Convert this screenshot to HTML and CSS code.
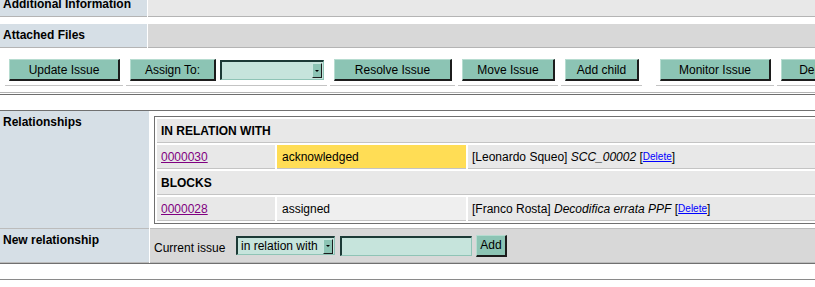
FILE: index.html
```html
<!DOCTYPE html>
<html>
<head>
<meta charset="utf-8">
<title>Issue details</title>
<link rel="stylesheet" href="styles.css">
</head>
<body>
<div class="page">
  <div class="row row-info">
    <div class="label">Additional Information</div>
    <div class="value value-light"></div>
  </div>
  <div class="row row-files">
    <div class="label">Attached Files</div>
    <div class="value value-dark"></div>
  </div>

  <div class="actions">
    <div class="act"><button class="btn w-update">Update Issue</button></div>
    <div class="act"><button class="btn w-assign">Assign To:</button><span class="select sel-assign"><span class="sel-text"></span><span class="sel-arrow"><span class="tri"></span></span></span></div>
    <div class="act"><button class="btn w-resolve">Resolve Issue</button></div>
    <div class="act"><button class="btn w-move">Move Issue</button></div>
    <div class="act"><button class="btn w-child">Add child</button></div>
    <div class="act-spacer"></div>
    <div class="act"><button class="btn w-monitor">Monitor Issue</button></div>
    <div class="act"><button class="btn w-delete">Delete Issue</button></div>
  </div>

  <div class="sep"></div>

  <div class="rel">
    <div class="rel-row">
      <div class="rel-label">Relationships</div>
      <div class="rel-body">
        <div class="inner">
          <div class="icell ihead">IN RELATION WITH</div>
          <div class="icell"><a class="issue" href="#">0000030</a></div>
          <div class="icell st-ack">acknowledged</div>
          <div class="icell">[Leonardo Squeo]&nbsp;<i>SCC_00002</i>&nbsp;[<a class="del" href="#">Delete</a>]</div>
          <div class="icell ihead">BLOCKS</div>
          <div class="icell"><a class="issue" href="#">0000028</a></div>
          <div class="icell st-assigned">assigned</div>
          <div class="icell">[Franco Rosta]&nbsp;<i>Decodifica errata PPF</i>&nbsp;[<a class="del" href="#">Delete</a>]</div>
        </div>
      </div>
    </div>
    <div class="rel-row rel-new">
      <div class="rel-label">New relationship</div>
      <div class="rel-form">
        <span class="cur">Current issue</span>
        <span class="select sel-type"><span class="sel-text">in relation with</span><span class="sel-arrow"><span class="tri"></span></span></span>
        <span class="input"></span>
        <button class="btn btn-add">Add</button>
      </div>
    </div>
  </div>

  <div class="tail"></div>
</div>
</body>
</html>
```

FILE: styles.css
```css
html, body {
  margin: 0;
  padding: 0;
  overflow: hidden;
  background: #ffffff;
}

body {
  font-family: "Liberation Sans", Arial, sans-serif;
  font-size: 12px;
  color: #000;
}

.page {
  width: 900px;
  margin-top: -7px;
}

/* top info rows */
.row {
  display: flex;
  gap: 1px;
  height: 24px;
}

.row-files {
  margin-top: 7px;
}

.label {
  width: 147px;
  flex: none;
  box-sizing: border-box;
  padding: 4px 3px;
  background: #d6dfe6;
  font-weight: bold;
  line-height: 15px;
  border-bottom: 1px solid #b4b4b4;
  white-space: nowrap;
}

.value {
  flex: 1;
  border-bottom: 1px solid #b4b4b4;
}

.value-light { background: #e8e8e8; }
.value-dark { background: #d8d8d8; }

/* action buttons */
.actions {
  display: flex;
  gap: 3px;
  margin-top: 8px;
  padding-left: 5px;
}

.act {
  display: flex;
  align-items: center;
  gap: 4px;
  padding: 3px 3px 4px 4px;
  border-bottom: 1px solid #c4c4c4;
  flex: none;
}

.act-spacer {
  width: 8px;
  flex: none;
}

.btn {
  height: 22px;
  box-sizing: border-box;
  padding: 0;
  margin: 0;
  font-family: "Liberation Sans", Arial, sans-serif;
  font-size: 12px;
  color: #000;
  background: #8cc4b4;
  border-style: solid;
  border-width: 1px 2px 2px 1px;
  border-color: #b6dcd0 #1c1c1c #1c1c1c #b6dcd0;
  text-align: center;
  white-space: nowrap;
  overflow: hidden;
  flex: none;
}

.w-update { width: 111px; }
.w-assign { width: 86px; }
.w-resolve { width: 118px; }
.w-move { width: 93px; }
.w-child { width: 74px; }
.w-monitor { width: 111px; }
.w-delete { width: 104px; }

/* fake select */
.select {
  display: flex;
  align-items: center;
  box-sizing: border-box;
  background: #c6e4dc;
  border-style: solid;
  border-width: 2px 1px 1px 2px;
  border-color: #1c3a36 #8fc4b6 #8fc4b6 #1c3a36;
  flex: none;
}

.sel-assign {
  width: 104px;
  height: 20px;
}

.sel-text {
  flex: 1;
  padding-left: 3px;
  white-space: nowrap;
  font-size: 12px;
}

.sel-arrow {
  width: 10px;
  height: 15px;
  box-sizing: border-box;
  background: #8cc4b4;
  border-style: solid;
  border-width: 1px;
  border-color: #c8e6de #1c1c1c #1c1c1c #c8e6de;
  display: flex;
  align-items: center;
  justify-content: center;
  margin-right: 1px;
  flex: none;
}

.tri {
  width: 0;
  height: 0;
  border-left: 2px solid transparent;
  border-right: 2px solid transparent;
  border-top: 2px solid #000;
}

/* separator */
.sep {
  height: 1px;
  margin-top: 6px;
  border-top: 1px solid #b4b4b4;
  border-bottom: 1px solid #6e6e6e;
}

/* relationships table */
.rel {
  margin-top: 15px;
  border-top: 1px solid #707070;
  border-bottom: 1px solid #707070;
}

.rel-row {
  display: flex;
  gap: 1px;
}

.rel-label {
  width: 149px;
  flex: none;
  box-sizing: border-box;
  padding: 4px 3px;
  background: #d6dfe6;
  font-weight: bold;
  line-height: 15px;
  border-bottom: 1px solid #bcbcbc;
  white-space: nowrap;
}

.rel-body {
  flex: 1;
  background: #fff;
  padding: 5px 0 4px 4px;
  border-bottom: 1px solid #bcbcbc;
}

.inner {
  display: grid;
  grid-template-columns: 118px 189px 1fr;
  grid-auto-rows: 24px;
  gap: 2px;
  padding: 2px;
  border: 1px solid #707070;
}

.icell {
  box-sizing: border-box;
  background: #e8e8e8;
  border-bottom: 1px solid #c4c4c4;
  padding: 0 4px;
  display: flex;
  align-items: center;
  white-space: nowrap;
}

.ihead {
  grid-column: 1 / -1;
  font-weight: bold;
}

.st-ack {
  background: #ffdd55;
  padding-left: 5px;
}

.st-assigned {
  background: #efefef;
  padding-left: 5px;
}

.issue {
  color: #800080;
  text-decoration: underline;
}

.del {
  color: #0000ff;
  font-size: 10px;
  text-decoration: underline;
}

.rel-new .rel-label {
  height: 34px;
}

.rel-form {
  flex: 1;
  box-sizing: border-box;
  height: 34px;
  display: flex;
  align-items: center;
  padding: 0 4px;
  background: #d8d8d8;
  border-bottom: 1px solid #bcbcbc;
}

.cur {
  width: 82px;
  flex: none;
  margin-top: 5px;
  white-space: nowrap;
}

.sel-type {
  width: 99px;
  height: 19px;
}

.sel-type .sel-text {
  padding-left: 3px;
}

.input {
  width: 132px;
  height: 20px;
  margin-left: 5px;
  box-sizing: border-box;
  background: #c6e4dc;
  border-style: solid;
  border-width: 2px 1px 1px 2px;
  border-color: #1c3a36 #8fc4b6 #8fc4b6 #1c3a36;
  flex: none;
}

.btn-add {
  width: 31px;
  margin-left: 4px;
}

.tail {
  margin-top: 15px;
  border-top: 1px solid #8a8a8a;
}
```
